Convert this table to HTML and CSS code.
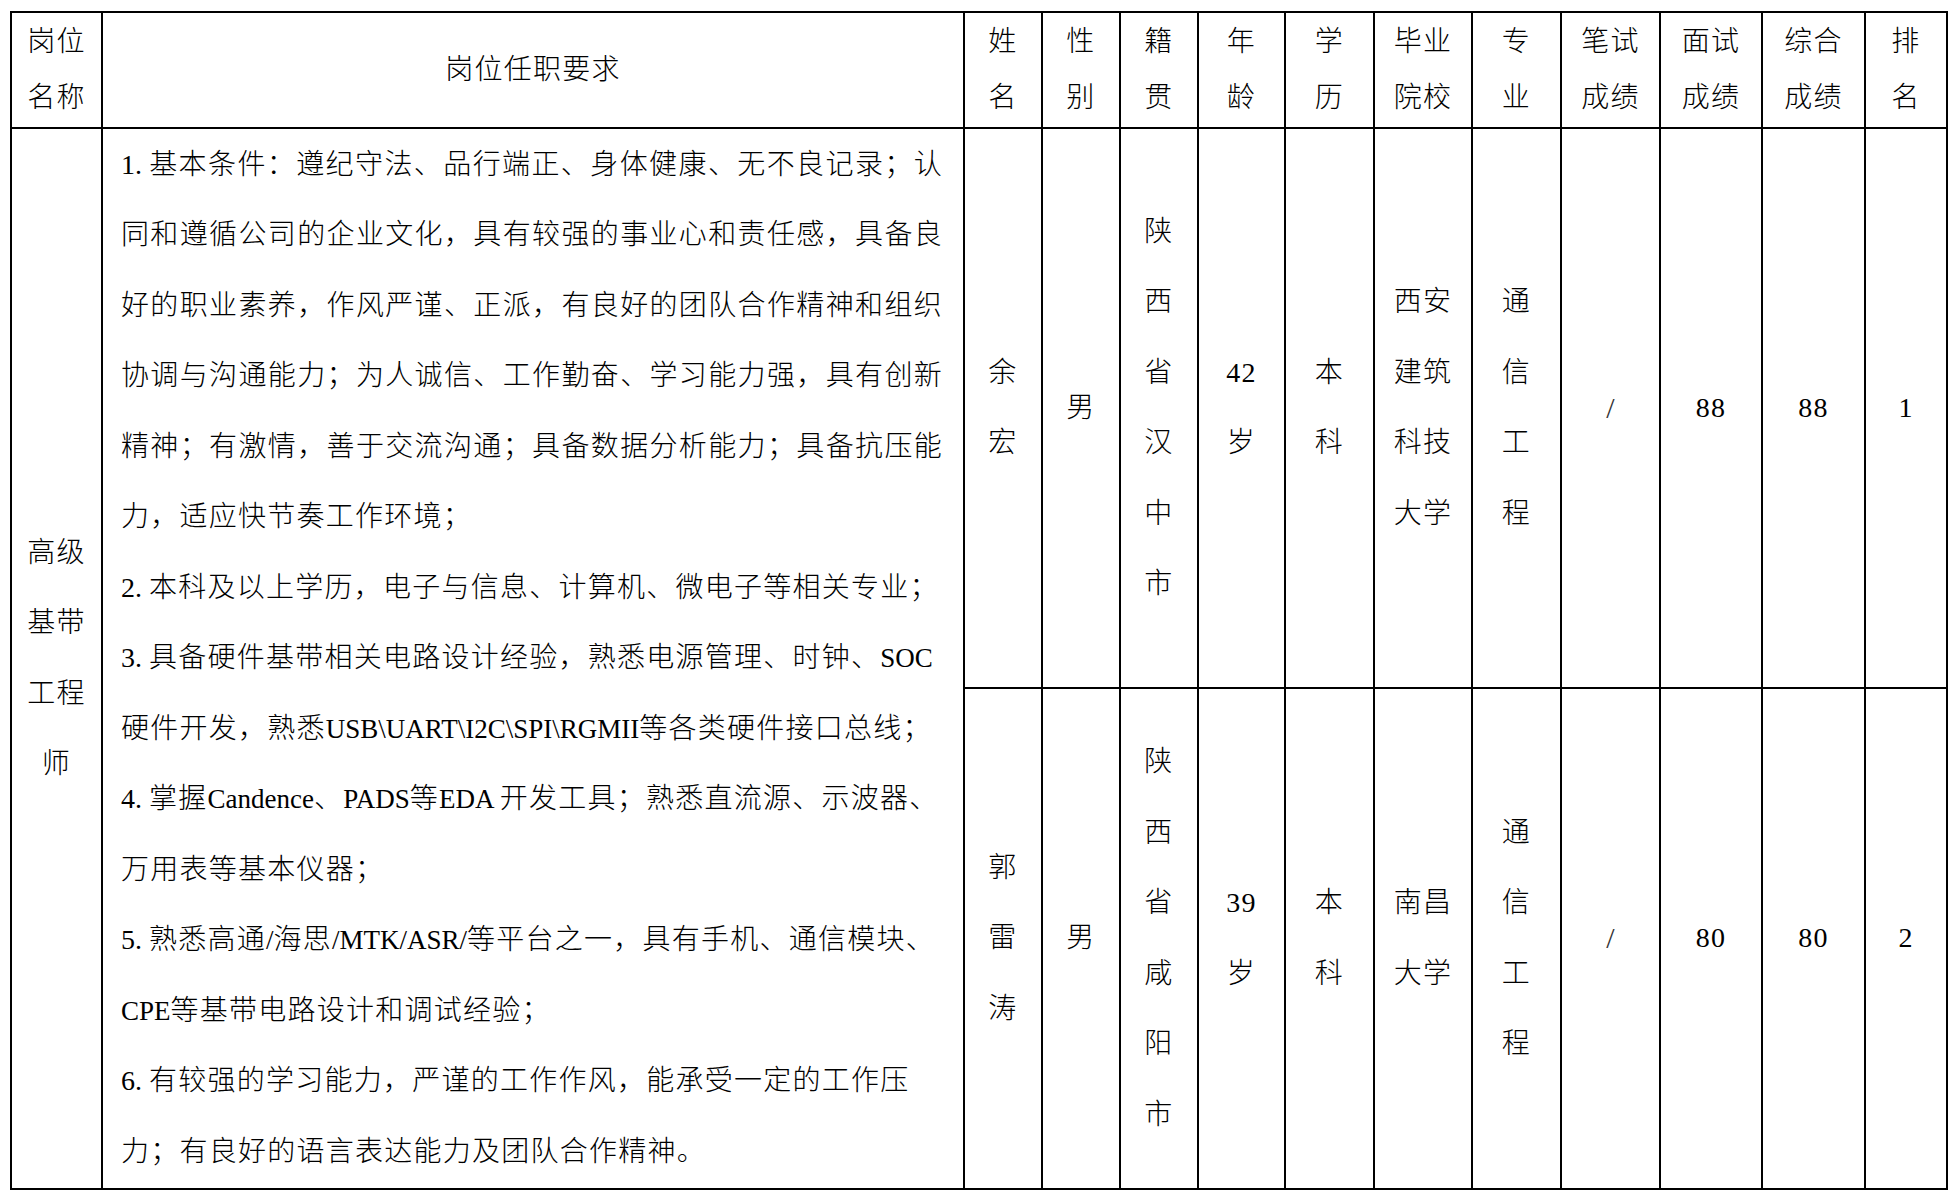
FILE: index.html
```html
<!DOCTYPE html>
<html lang="zh-CN">
<head>
<meta charset="utf-8">
<title>岗位任职要求</title>
<link rel="stylesheet" href="styles.css">
</head>
<body>
<div class="page">
  <div class="sheet">
    <div class="cell head">岗位<br>名称</div>
    <div class="cell head">岗位任职要求</div>
    <div class="cell head">姓<br>名</div>
    <div class="cell head">性<br>别</div>
    <div class="cell head">籍<br>贯</div>
    <div class="cell head">年<br>龄</div>
    <div class="cell head">学<br>历</div>
    <div class="cell head">毕业<br>院校</div>
    <div class="cell head">专<br>业</div>
    <div class="cell head">笔试<br>成绩</div>
    <div class="cell head">面试<br>成绩</div>
    <div class="cell head">综合<br>成绩</div>
    <div class="cell head">排<br>名</div>

    <div class="cell data span2">高级<br>基带<br>工程<br>师</div>
    <div class="cell req span2">
      <div class="req-text">
        <span class="ln fill"><span class="num">1.</span>基本条件：遵纪守法、品行端正、身体健康、无不良记录；认</span>
        <span class="ln fill">同和遵循公司的企业文化，具有较强的事业心和责任感，具备良</span>
        <span class="ln fill">好的职业素养，作风严谨、正派，有良好的团队合作精神和组织</span>
        <span class="ln fill">协调与沟通能力；为人诚信、工作勤奋、学习能力强，具有创新</span>
        <span class="ln fill">精神；有激情，善于交流沟通；具备数据分析能力；具备抗压能</span>
        <span class="ln">力，适应快节奏工作环境；</span>
        <span class="ln"><span class="num">2.</span>本科及以上学历，电子与信息、计算机、微电子等相关专业；</span>
        <span class="ln"><span class="num">3.</span>具备硬件基带相关电路设计经验，熟悉电源管理、时钟、<span class="lat">SOC</span></span>
        <span class="ln">硬件开发，熟悉<span class="lat">USB\UART\I2C\SPI\RGMII</span>等各类硬件接口总线；</span>
        <span class="ln"><span class="num">4.</span>掌握<span class="lat">Candence</span>、<span class="lat">PADS</span>等<span class="lat">EDA </span>开发工具；熟悉直流源、示波器、</span>
        <span class="ln">万用表等基本仪器；</span>
        <span class="ln"><span class="num">5.</span>熟悉高通<span class="lat">/</span>海思<span class="lat">/MTK/ASR/</span>等平台之一，具有手机、通信模块、</span>
        <span class="ln"><span class="lat">CPE</span>等基带电路设计和调试经验；</span>
        <span class="ln"><span class="num">6.</span>有较强的学习能力，严谨的工作作风，能承受一定的工作压</span>
        <span class="ln">力；有良好的语言表达能力及团队合作精神。</span>
      </div>
    </div>

    <div class="cell data">余<br>宏</div>
    <div class="cell data">男</div>
    <div class="cell data">陕<br>西<br>省<br>汉<br>中<br>市</div>
    <div class="cell data">42<br>岁</div>
    <div class="cell data">本<br>科</div>
    <div class="cell data">西安<br>建筑<br>科技<br>大学</div>
    <div class="cell data">通<br>信<br>工<br>程</div>
    <div class="cell data slash">/</div>
    <div class="cell data">88</div>
    <div class="cell data">88</div>
    <div class="cell data">1</div>

    <div class="cell data">郭<br>雷<br>涛</div>
    <div class="cell data">男</div>
    <div class="cell data">陕<br>西<br>省<br>咸<br>阳<br>市</div>
    <div class="cell data">39<br>岁</div>
    <div class="cell data">本<br>科</div>
    <div class="cell data">南昌<br>大学</div>
    <div class="cell data">通<br>信<br>工<br>程</div>
    <div class="cell data slash">/</div>
    <div class="cell data">80</div>
    <div class="cell data">80</div>
    <div class="cell data">2</div>
  </div>
</div>
</body>
</html>
```

FILE: styles.css
```css
html, body {
  margin: 0;
  padding: 0;
  background: #ffffff;
}

body {
  font-family: "Liberation Serif", "Noto Sans CJK SC", serif;
  font-size: 28px;
  font-weight: 300;
  color: #000000;
}

.page {
  padding: 11px 0 0 10px;
}

.sheet {
  display: grid;
  grid-template-columns: 91px 862px 78px 78px 78px 87px 89px 98px 89px 99px 102px 103px 82px;
  grid-template-rows: 116px 560px 501px;
  width: max-content;
  border-top: 2px solid #000;
  border-left: 2px solid #000;
}

.cell {
  box-sizing: border-box;
  border-right: 2px solid #000;
  border-bottom: 2px solid #000;
  display: flex;
  align-items: center;
  justify-content: center;
  text-align: center;
  letter-spacing: 1.25px;
}

.head {
  line-height: 56px;
}

.data {
  line-height: 70.5px;
}

.span2 {
  grid-row: span 2;
}

.slash {
  font-size: 30px;
  color: #333;
  letter-spacing: 0;
}

.req {
  justify-content: flex-start;
  text-align: left;
  padding: 0 20px 0 18px;
}

.req-text {
  width: 100%;
  line-height: 70.5px;
}

.ln {
  display: block;
  white-space: nowrap;
}

.ln.fill {
  white-space: normal;
  text-align: justify;
  text-align-last: justify;
}

.lat {
  font-size: 27px;
  letter-spacing: 0;
}

.num {
  display: inline-block;
  min-width: 28px;
  letter-spacing: 0;
}
```
